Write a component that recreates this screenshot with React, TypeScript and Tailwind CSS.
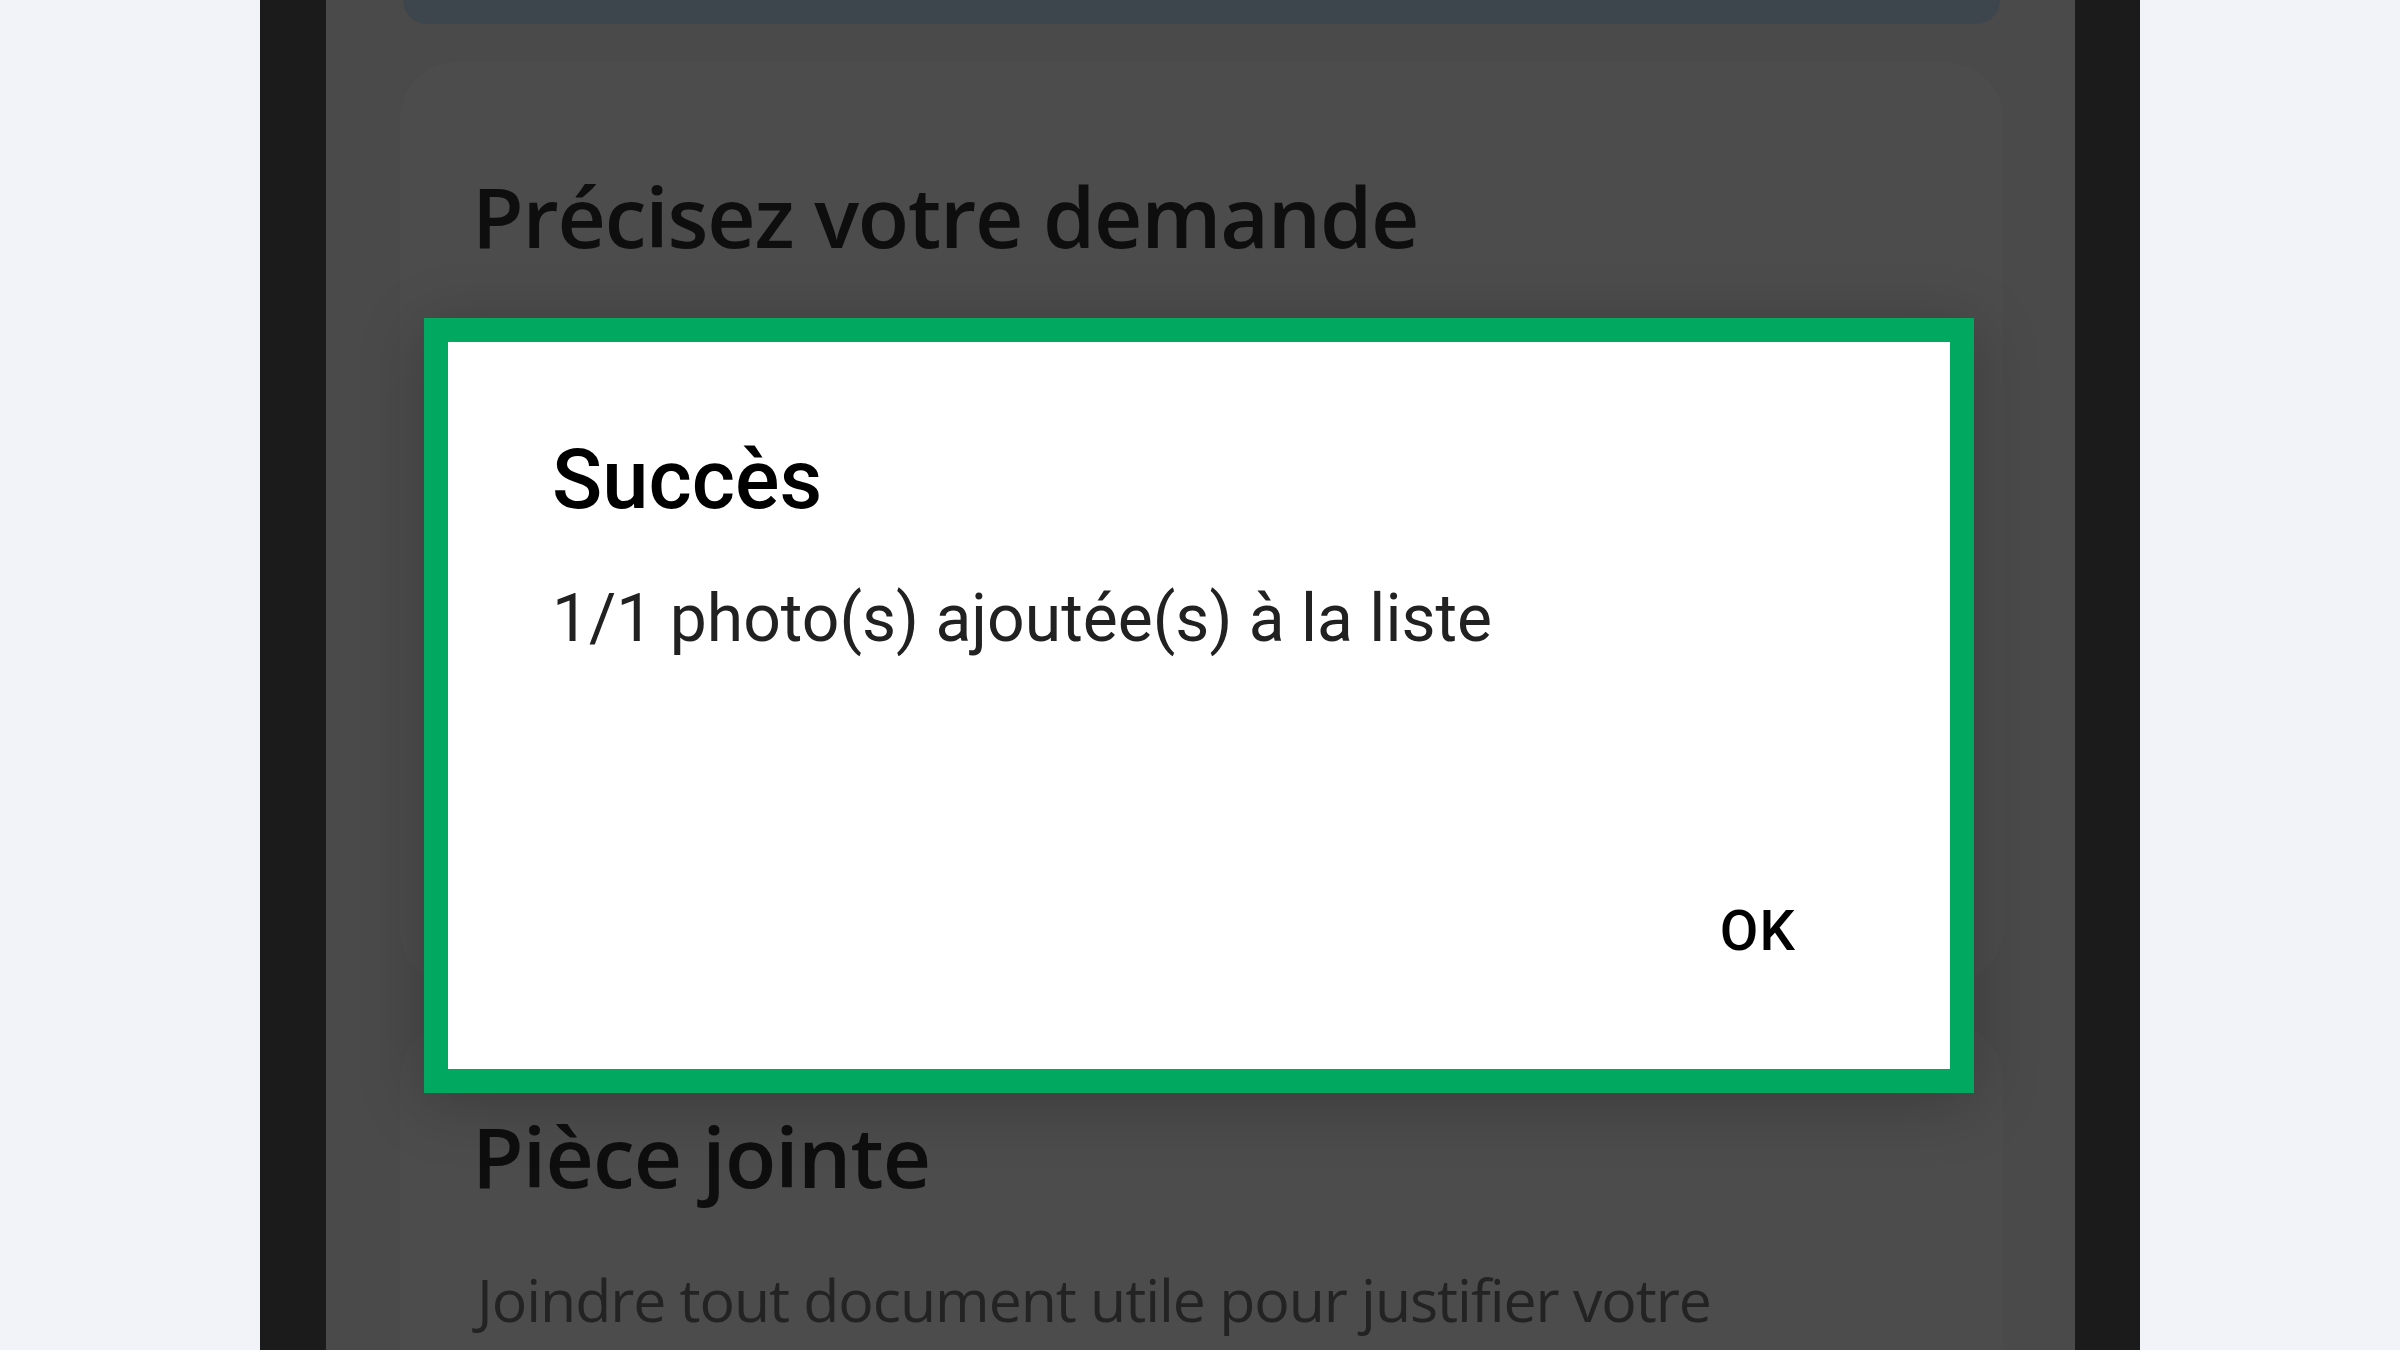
import React from 'react'

const OPEN_SANS = { fontFamily: '"Open Sans", "Noto Sans", sans-serif' }
const ROBOTO = { fontFamily: 'Roboto, "Noto Sans", sans-serif' }

function SuccessDialog() {
  return (
    <div className="absolute left-[98px] top-[318px] w-[1550px] h-[775px] border-[24px] border-[#00a95f] bg-white shadow-[0_10px_60px_rgba(0,0,0,0.22)]">
      <div className="flex h-full flex-col pl-[104px] pr-[154px] pt-[91px]" style={ROBOTO}>
        <h2 className="text-[83px] leading-[94px] font-medium text-black">Succès</h2>
        <p className="mt-[54px] text-[66px] leading-[75px] text-[#212121]">1/1 photo(s) ajoutée(s) à la liste</p>
        <button type="button" className="mt-[242px] self-end text-[56px] leading-[66px] font-medium uppercase tracking-[0.02em] text-black">
          OK
        </button>
      </div>
    </div>
  )
}

function PhoneScreen() {
  return (
    <div className="relative h-full w-[1749px] shrink-0 overflow-hidden bg-[#4a4a4a]">
      <div className="flex flex-col pl-[74px] pr-[72px]" style={OPEN_SANS}>
        {/* bout de la carte précédente */}
        <div className="mx-[3px] h-[24px] rounded-b-[30px] bg-[#3e464d]" />

        <section className="mt-[38px] h-[923px] rounded-[56px] bg-[#4c4c4c] pl-[72px] pt-[97px]">
          <h1 className="text-[84px] leading-[114px] font-semibold tracking-[-0.014em] text-[#0e0e0e]">Précisez votre demande</h1>
        </section>

        <section className="mt-[38px] h-[600px] rounded-t-[56px] bg-[#4c4c4c] pl-[72px] pt-[76px]">
          <h1 className="text-[84px] leading-[114px] font-semibold tracking-[-0.01em] text-[#0e0e0e]">Pièce jointe</h1>
          <p className="mt-[47px] pl-[5px] text-[59px] leading-[79px] tracking-[-0.018em] text-[#232323]">
            Joindre tout document utile pour justifier votre
          </p>
        </section>
      </div>

      <SuccessDialog />
    </div>
  )
}

export default function App() {
  return (
    <div className="flex h-[1350px] w-[2400px] overflow-hidden bg-[#f2f3f8]">
      <div className="w-[260px] shrink-0" />
      <div className="w-[66px] shrink-0 bg-[#1b1b1b]" />
      <PhoneScreen />
      <div className="w-[65px] shrink-0 bg-[#1b1b1b]" />
      <div className="flex-1" />
    </div>
  )
}
